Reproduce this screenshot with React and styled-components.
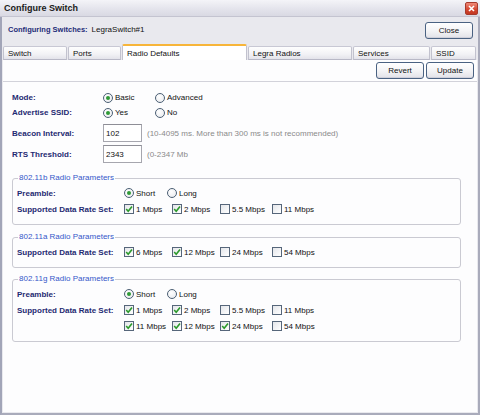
import React from "react";
import styled, { createGlobalStyle } from "styled-components";

const Global = createGlobalStyle`
  html, body { margin: 0; padding: 0; background: #ffffff; }
  body { font-family: "Liberation Sans", Arial, sans-serif; font-size: 8px; color: #111; }
  * { box-sizing: border-box; }
`;

const Window = styled.div`
  width: 480px;
  height: 415px;
  display: flex;
  flex-direction: column;
  background: #e9e9ee;
  overflow: hidden;
`;

const TitleBar = styled.div`
  height: 17px;
  flex: none;
  display: flex;
  align-items: center;
  justify-content: space-between;
  padding: 0 2px 0 4px;
  background: linear-gradient(#f4f4f8 0%, #e4e4ec 55%, #d9d9e3 100%);
  border-bottom: 1px solid #c4c4d0;
`;

const Title = styled.span`
  font-size: 9px;
  font-weight: bold;
  color: #1a1a1a;
`;

const CloseX = styled.div`
  width: 13px;
  height: 13px;
  border-radius: 2px;
  border: 1px solid #a63a2c;
  background: linear-gradient(#f08a78, #d4452f 60%, #c23822);
  display: flex;
  align-items: center;
  justify-content: center;
`;

const Frame = styled.div`
  flex: 1;
  display: flex;
  flex-direction: column;
  border-left: 2px solid #a2a5b8;
  border-right: 2px solid #a9abbb;
  border-bottom: 2px solid #a9abbb;
  padding: 0 1px 1px 1px;
  min-height: 0;
`;

const Header = styled.div`
  height: 27px;
  flex: none;
  display: flex;
  align-items: center;
  justify-content: space-between;
  padding: 0 4px 0 5px;
`;

const Configuring = styled.div`
  display: flex;
  gap: 4px;
  align-items: center;
  margin-top: -3px;
`;

const ConfigLabel = styled.span`
  font-weight: bold;
  font-size: 7.5px;
  color: #242c78;
`;

const Button = styled.button`
  width: 48px;
  height: 17px;
  padding: 0;
  font-family: inherit;
  font-size: 8px;
  color: #111;
  border: 1px solid #4a6282;
  border-radius: 3px;
  background: linear-gradient(#ffffff 0%, #f4f4f6 50%, #e2e2e8 100%);
  box-shadow: inset 0 -1px 0 #d0d0da;
`;

const TabStrip = styled.div`
  height: 16px;
  flex: none;
  display: flex;
  align-items: flex-end;
  gap: 1px;
`;

const Tab = styled.div`
  width: ${(p) => p.$w}px;
  height: ${(p) => (p.$active ? 16 : 14)}px;
  display: flex;
  align-items: center;
  padding-left: 4px;
  font-size: 8px;
  color: #111;
  border: 1px solid #c2c2ce;
  border-bottom: ${(p) => (p.$active ? "none" : "1px solid #b8b8c6")};
  border-top: ${(p) => (p.$active ? "2px solid #f7b53a" : "1px solid #c8c8d4")};
  border-radius: 2px 2px 0 0;
  background: ${(p) =>
    p.$active ? "#ffffff" : "linear-gradient(#fefefe 0%, #f2f2f5 60%, #e3e3ea 100%)"};
`;

const Panel = styled.div`
  flex: 1;
  background: #fdfdfe;
  display: flex;
  flex-direction: column;
  min-height: 0;
`;

const Toolbar = styled.div`
  display: flex;
  justify-content: flex-end;
  gap: 2px;
  padding: 2px 3px 0 0;
  border-bottom: 1px solid #d2d2da;
  padding-bottom: 2px;
`;

const Form = styled.div`
  display: flex;
  flex-direction: column;
  padding: 8px 0 0 9px;
`;

const Row = styled.div`
  display: flex;
  align-items: center;
  height: ${(p) => p.$h || 15}px;
  margin-top: ${(p) => p.$mt || 0}px;
`;

const Label = styled.div`
  width: ${(p) => p.$w}px;
  flex: none;
  font-weight: bold;
  color: #1f2a72;
`;

const Option = styled.label`
  width: ${(p) => (p.$w ? `${p.$w}px` : "auto")};
  flex: none;
  display: flex;
  align-items: center;
  gap: 2px;
  color: #111;
`;

const RadioCircle = styled.span`
  width: 10px;
  height: 10px;
  border-radius: 50%;
  border: 1px solid #4b5f74;
  background: radial-gradient(circle at 40% 35%, #ffffff, #e6e8ec);
  display: flex;
  align-items: center;
  justify-content: center;
  &::after {
    content: "";
    width: 4px;
    height: 4px;
    border-radius: 50%;
    background: ${(p) => (p.$on ? "#2f9a36" : "transparent")};
  }
`;

const CheckBox = styled.span`
  width: 10px;
  height: 10px;
  border: 1px solid #56667a;
  background: linear-gradient(135deg, #e4e6ea, #ffffff);
  display: flex;
  align-items: center;
  justify-content: center;
`;

const TextInput = styled.input`
  width: 39px;
  height: 18px;
  padding: 0 2px;
  font-family: inherit;
  font-size: 8px;
  color: #111;
  border: 1px solid #a6a6ae;
  border-top-color: #8e8e96;
  background: #ffffff;
  outline: none;
`;

const Hint = styled.span`
  margin-left: 5px;
  color: #8a8a8a;
`;

const Group = styled.fieldset`
  width: 449px;
  margin: ${(p) => p.$mt}px 0 0 0;
  padding: 2px 0 7px 4px;
  border: 1px solid #cacad2;
  border-radius: 3px;
  min-width: 0;
`;

const Legend = styled.legend`
  padding: 0 1px;
  margin-left: 1px;
  height: 10px;
  line-height: 10px;
  color: #3557c9;
`;

function Radio({ on, label, w }) {
  return (
    <Option $w={w}>
      <RadioCircle $on={on} />
      {label}
    </Option>
  );
}

function Check({ on, label, w }) {
  return (
    <Option $w={w}>
      <CheckBox>
        {on && (
          <svg width="8" height="8" viewBox="0 0 8 8">
            <polyline
              points="1.2,4 3.2,6.2 7,1.4"
              fill="none"
              stroke="#2c9a2c"
              strokeWidth="1.6"
            />
          </svg>
        )}
      </CheckBox>
      {label}
    </Option>
  );
}

const rateCols = [48, 48, 52, 0];

function RateRow({ label, rates }) {
  return (
    <Row $h={16}>
      <Label $w={107}>{label}</Label>
      {rates.map(([name, on], i) => (
        <Check key={name} on={on} label={name} w={rateCols[i] || undefined} />
      ))}
    </Row>
  );
}

function PreambleRow() {
  return (
    <Row $h={16}>
      <Label $w={107}>Preamble:</Label>
      <Radio on label="Short" w={43} />
      <Radio label="Long" />
    </Row>
  );
}

const tabs = [
  ["Switch", 64],
  ["Ports", 53],
  ["Radio Defaults", 125],
  ["Legra Radios", 104],
  ["Services", 77],
  ["SSID", 45],
];

export default function App() {
  return (
    <>
      <Global />
      <Window>
        <TitleBar>
          <Title>Configure Switch</Title>
          <CloseX>
            <svg width="7" height="7" viewBox="0 0 7 7">
              <path d="M1 1L6 6M6 1L1 6" stroke="#fff" strokeWidth="1.6" />
            </svg>
          </CloseX>
        </TitleBar>
        <Frame>
          <Header>
            <Configuring>
              <ConfigLabel>Configuring Switches:</ConfigLabel>
              <span>LegraSwitch#1</span>
            </Configuring>
            <Button>Close</Button>
          </Header>
          <TabStrip>
            {tabs.map(([name, w]) => (
              <Tab key={name} $w={w} $active={name === "Radio Defaults"}>
                {name}
              </Tab>
            ))}
          </TabStrip>
          <Panel>
            <Toolbar>
              <Button>Revert</Button>
              <Button>Update</Button>
            </Toolbar>
            <Form>
              <Row>
                <Label $w={91}>Mode:</Label>
                <Radio on label="Basic" w={52} />
                <Radio label="Advanced" />
              </Row>
              <Row>
                <Label $w={91}>Advertise SSID:</Label>
                <Radio on label="Yes" w={52} />
                <Radio label="No" />
              </Row>
              <Row $h={18} $mt={4}>
                <Label $w={91}>Beacon Interval:</Label>
                <TextInput defaultValue="102" />
                <Hint>(10-4095 ms. More than 300 ms is not recommended)</Hint>
              </Row>
              <Row $h={18} $mt={3}>
                <Label $w={91}>RTS Threshold:</Label>
                <TextInput defaultValue="2343" />
                <Hint>(0-2347 Mb</Hint>
              </Row>

              <Group $mt={10}>
                <Legend>802.11b Radio Parameters</Legend>
                <PreambleRow />
                <RateRow
                  label="Supported Data Rate Set:"
                  rates={[["1 Mbps", true], ["2 Mbps", true], ["5.5 Mbps", false], ["11 Mbps", false]]}
                />
              </Group>

              <Group $mt={7}>
                <Legend>802.11a Radio Parameters</Legend>
                <RateRow
                  label="Supported Data Rate Set:"
                  rates={[["6 Mbps", true], ["12 Mbps", true], ["24 Mbps", false], ["54 Mbps", false]]}
                />
              </Group>

              <Group $mt={6}>
                <Legend>802.11g Radio Parameters</Legend>
                <PreambleRow />
                <RateRow
                  label="Supported Data Rate Set:"
                  rates={[["1 Mbps", true], ["2 Mbps", true], ["5.5 Mbps", false], ["11 Mbps", false]]}
                />
                <RateRow
                  label=""
                  rates={[["11 Mbps", true], ["12 Mbps", true], ["24 Mbps", true], ["54 Mbps", false]]}
                />
              </Group>
            </Form>
          </Panel>
        </Frame>
      </Window>
    </>
  );
}
